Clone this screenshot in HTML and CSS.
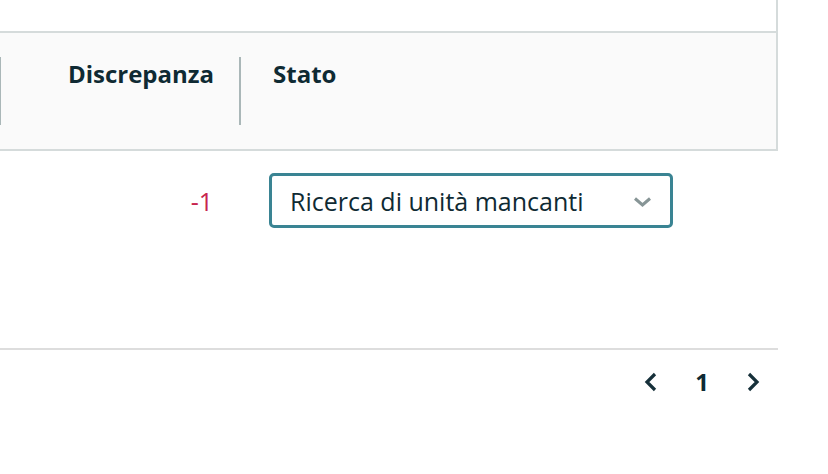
FILE: index.html
```
<!DOCTYPE html>
<html lang="it">
<head>
<meta charset="utf-8">
<title>Tabella</title>
<link rel="stylesheet" href="styles.css">
</head>
<body>
<div class="head-wrap">
  <div class="spacer"></div>
  <div class="thead">
    <div class="th th-disc">Discrepanza</div>
    <div class="th th-stato">Stato</div>
  </div>
</div>
<div class="row">
  <div class="td td-disc"><span class="neg">-1</span></div>
  <div class="td td-stato">
    <div class="select">
      <span class="select-text">Ricerca di unità mancanti</span>
      <svg class="select-caret" width="19" height="10" viewBox="0 0 19 10"><polyline points="2,1.5 9.5,8 17,1.5" fill="none" stroke="#879596" stroke-width="3"/></svg>
    </div>
  </div>
</div>
<div class="pager">
  <svg class="pg-arrow" width="14" height="20" viewBox="0 0 14 20"><polyline points="11,2 3,10 11,18" fill="none" stroke="#16303a" stroke-width="3.2"/></svg>
  <span class="pg-num">1</span>
  <svg class="pg-arrow" width="14" height="20" viewBox="0 0 14 20"><polyline points="3,2 11,10 3,18" fill="none" stroke="#16303a" stroke-width="3.2"/></svg>
</div>
</body>
</html>
```
FILE: styles.css
```
html, body {
  margin: 0;
  padding: 0;
  background: #ffffff;
}
body {
  font-family: "Open Sans", "Noto Sans", sans-serif;
  color: #16303a;
  width: 828px;
  height: 474px;
  overflow: hidden;
}
.head-wrap {
  width: 776px;
  border-right: 2px solid #d5dbdb;
}
.spacer {
  height: 31px;
}
.thead {
  display: flex;
  background: #fafafa;
  border-top: 2px solid #d5dbdb;
  border-bottom: 2px solid #d5dbdb;
  padding: 24px 0;
}
.th {
  box-sizing: border-box;
  height: 68px;
  border-left: 2px solid #aab7b8;
  font-weight: 700;
  font-size: 24px;
  line-height: 34px;
  color: #0f2a33;
}
.th-disc {
  margin-left: -1px;
  width: 240px;
  text-align: right;
  padding-right: 25px;
}
.th-stato {
  padding-left: 32px;
  flex: 1;
}
.row {
  display: flex;
  width: 778px;
  padding-top: 22px;
  box-sizing: border-box;
  height: 199px;
  border-bottom: 2px solid #dddddd;
}
.td {
  height: 55px;
  display: flex;
  align-items: center;
  font-size: 25px;
}
.td-disc {
  width: 239px;
  justify-content: flex-end;
  padding-right: 26px;
  box-sizing: border-box;
}
.neg {
  color: #c7254e;
}
.td-stato {
  padding-left: 30px;
}
.select {
  box-sizing: border-box;
  width: 404px;
  height: 55px;
  border: 3px solid #3a8493;
  border-radius: 5px;
  display: flex;
  align-items: center;
  justify-content: space-between;
  padding: 0 18px 0 18px;
  color: #0f2a33;
}
.select-text {
  font-size: 25px;
  line-height: 32px;
}
.select-caret {
  margin-top: 2px;
}
.pager {
  width: 778px;
  box-sizing: border-box;
  display: flex;
  justify-content: flex-end;
  align-items: center;
  padding: 0 18px 0 0;
  height: 64px;
}
.pg-arrow {
  display: block;
}
.pg-num {
  font-weight: 700;
  font-size: 24px;
  line-height: 24px;
  width: 22px;
  text-align: center;
  margin: 0 33px;
  color: #0f2a33;
}
```
